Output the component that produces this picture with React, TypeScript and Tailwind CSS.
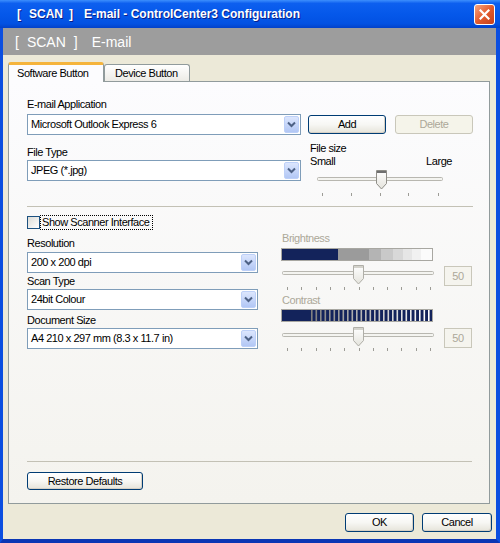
import React from "react";

// XP-style (Luna) dialog: [ SCAN ] E-mail - ControlCenter3 Configuration

function Btn({
  children,
  className = "",
  disabled = false,
}: {
  children: React.ReactNode;
  className?: string;
  disabled?: boolean;
}) {
  return (
    <div
      className={`flex items-center justify-center rounded-[3px] border ${
        disabled
          ? "border-[#c9c7ba] bg-[#f5f4ea] text-[#aca899]"
          : "border-[#003c74] bg-linear-to-b from-white via-[#f7f7f4] to-[#e6e4da] text-black shadow-[inset_-1px_-1px_0_#d6d0c5]"
      } ${className}`}
    >
      {children}
    </div>
  );
}

function Combo({ value, className = "" }: { value: string; className?: string }) {
  return (
    <div className={`flex h-[21px] items-center border border-[#7f9db9] bg-white ${className}`}>
      <span className="flex-1 truncate pl-[3px] leading-[13px]">{value}</span>
      <div className="mr-px flex h-[17px] w-[15px] items-center justify-center rounded-[2px] border border-[#bdd0f8] bg-linear-to-b from-[#dce6fd] to-[#b2c7f5]">
        <svg width="9" height="7" viewBox="0 0 9 7">
          <path d="M1 1.5 L4.5 5 L8 1.5" fill="none" stroke="#4d6185" strokeWidth="2" />
        </svg>
      </div>
    </div>
  );
}

// slider track + pentagon thumb + tick marks
function Slider({
  w,
  h,
  track,
  thumbX,
  thumbY,
  ticks,
  tickY,
  dark = false,
}: {
  w: number;
  h: number;
  track: [number, number, number];
  thumbX: number;
  thumbY: number;
  ticks: number[];
  tickY: number;
  dark?: boolean;
}) {
  const [x1, x2, ty] = track;
  return (
    <svg width={w} height={h} viewBox={`0 0 ${w} ${h}`} className="block">
      <defs>
        <linearGradient id={`th${thumbX}${thumbY}`} x1="0" y1="0" x2="0" y2="1">
          <stop offset="0" stopColor="#ffffff" />
          <stop offset="1" stopColor="#e4e3dc" />
        </linearGradient>
      </defs>
      <rect x={x1 + 0.5} y={ty - 1.5} width={x2 - x1} height="3" rx="1" fill="#f4f4f0" stroke="#b8b7b0" />
      <path
        d={`M${thumbX + 0.5} ${thumbY + 0.5} h10 v13 l-5 5.5 l-5 -5.5 z`}
        fill={`url(#th${thumbX}${thumbY})`}
        stroke={dark ? "#8f8e88" : "#b0afa8"}
      />
      <rect x={thumbX + 1} y={thumbY + 1} width="9" height="2" fill={dark ? "#6f6f6f" : "#d4d3cc"} />
      {ticks.map((t) => (
        <line key={t} x1={t + 0.5} x2={t + 0.5} y1={tickY} y2={tickY + 3} stroke="#9d9c96" />
      ))}
    </svg>
  );
}

function BrightnessBar() {
  const steps: [number, number, string][] = [
    [1, 57, "#13235b"],
    [57, 88, "#9b9b9b"],
    [88, 100, "#b4b4b4"],
    [100, 112, "#c9c9c9"],
    [112, 122, "#d8d8d8"],
    [122, 131, "#e6e6e6"],
    [131, 140, "#f1f1f1"],
    [140, 151, "#fbfbfb"],
  ];
  return (
    <svg width="152" height="13" viewBox="0 0 152 13" className="block">
      <rect x="0.5" y="0.5" width="151" height="12" fill="#fff" stroke="#a8a7a1" />
      {steps.map(([a, b, c]) => (
        <rect key={a} x={a} y="1" width={b - a} height="11" fill={c} />
      ))}
    </svg>
  );
}

function ContrastBar() {
  const stripes = Array.from({ length: 27 }, (_, i) => i);
  return (
    <svg width="152" height="13" viewBox="0 0 152 13" className="block">
      <rect x="0.5" y="0.5" width="151" height="12" fill="#13235b" stroke="#a8a7a1" />
      {stripes.map((i) => {
        const v = Math.round(0x80 + (0xff - 0x80) * (i / 26));
        return (
          <rect
            key={i}
            x={30 + i * 4.5}
            y="1"
            width="1.6"
            height="11"
            fill={`rgb(${v},${v},${v})`}
          />
        );
      })}
    </svg>
  );
}

function NumBox({ value }: { value: string }) {
  return (
    <div className="flex h-[20px] w-[28px] items-center justify-center border border-[#c9c7ba] bg-[#f5f4ee] text-[#aca899]">
      {value}
    </div>
  );
}

const BRIGHT_TICKS = Array.from({ length: 11 }, (_, i) => Math.round(6 + i * 14.3));

export default function App() {
  return (
    <div className="flex h-[543px] w-[500px] flex-col overflow-hidden font-['Liberation_Sans',Arial,sans-serif] text-[11px] tracking-[-0.45px] text-black">
      {/* title bar */}
      <div className="flex h-[28px] shrink-0 items-center bg-[linear-gradient(180deg,#3d8ffd_0%,#0d5fef_12%,#0558ea_50%,#0251e2_85%,#0241c8_100%)] pl-[17px] pr-[5px]">
        <div className="flex flex-1 items-center whitespace-pre text-[12px] font-bold leading-none tracking-normal text-white [text-shadow:1px_1px_0_#0a1e8a]">
          <span>[</span>
          <span className="ml-[8px]">SCAN</span>
          <span className="ml-[6px]">]</span>
          <span className="ml-[11px]">E-mail - ControlCenter3 Configuration</span>
        </div>
        <div className="flex h-[21px] w-[21px] items-center justify-center rounded-[3px] border border-white bg-linear-to-br from-[#f4a47e] via-[#e35b2d] to-[#c5401b]">
          <svg width="11" height="11" viewBox="0 0 11 11">
            <path d="M1.5 1.5 L9.5 9.5 M9.5 1.5 L1.5 9.5" stroke="#fff" strokeWidth="2.2" strokeLinecap="square" />
          </svg>
        </div>
      </div>

      {/* frame */}
      <div className="flex flex-1 flex-col border-r-[4px] border-b-[4px] border-l-[3px] border-r-[#0b4ee0] border-b-[#0a36b4] border-l-[#0b4ee0] bg-[#ece9d8]">
        {/* gray header band */}
        <div className="flex h-[27px] shrink-0 items-center whitespace-pre bg-[#9d9d9d] pl-[12px] text-[14px] leading-none tracking-normal text-white">
          <span>[</span>
          <span className="ml-[8px]">SCAN</span>
          <span className="ml-[8px]">]</span>
          <span className="ml-[14px]">E-mail</span>
        </div>

        {/* tabs */}
        <div className="mt-[7px] flex h-[19px] shrink-0 items-end pl-[5px]">
          <div className="relative z-10 -mb-px flex h-[20px] w-[96px] items-center rounded-t-[3px] border-x border-t-[3px] border-x-[#919b9c] border-t-[#f5b43c] bg-[#fcfcfe] pl-[8px] pt-[0px]">
            Software Button
          </div>
          <div className="flex h-[17px] w-[86px] items-center rounded-t-[3px] border-x border-t border-[#919b9c] bg-linear-to-b from-white to-[#ecebe6] pl-[10px]">
            Device Button
          </div>
        </div>

        {/* tab page */}
        <div className="ml-[5px] flex h-[423px] w-[482px] shrink-0 flex-col border border-[#919b9c] bg-linear-to-b from-[#fcfcfe] to-[#f4f3ee] pt-[16px] pr-[16px] pb-[13px] pl-[18px]">
          <div className="flex">
            <div className="w-[274px]">
              <div className="h-[13px] leading-[13px]">E-mail Application</div>
              <Combo className="mt-[3px]" value="Microsoft Outlook Express 6" />
              <div className="mt-[11px] h-[13px] leading-[13px]">File Type</div>
              <Combo className="mt-[1px]" value={'JPEG (*.jpg)'} />
            </div>
            <div className="ml-[7px] flex flex-col">
              <div className="mt-[17px] flex gap-[9px]">
                <Btn className="h-[19px] w-[78px]">Add</Btn>
                <Btn className="h-[19px] w-[78px]" disabled>
                  Delete
                </Btn>
              </div>
              <div className="mt-[8px] ml-[2px] h-[13px] leading-[13px]">File size</div>
              <div className="ml-[2px] flex h-[13px] w-[142px] justify-between leading-[13px]">
                <span>Small</span>
                <span>Large</span>
              </div>
              <div className="ml-[5px]">
                <Slider
                  w={132}
                  h={32}
                  track={[4, 129, 11]}
                  thumbX={63}
                  thumbY={2}
                  ticks={[9, 38, 67, 95, 125]}
                  tickY={25}
                  dark
                />
              </div>
            </div>
          </div>

          <div className="mt-[6px] h-px bg-[#c3c1b5]" />

          <div className="mt-[8px] flex h-[15px] items-center">
            <div className="h-[13px] w-[13px] border border-[#1c5180] bg-linear-to-br from-[#dcdcd7] to-white" />
            <div className="flex h-[15px] w-[113px] items-center border border-dotted border-black pl-[1px] leading-[13px]">
              Show Scanner Interface
            </div>
          </div>

          <div className="flex">
            <div className="w-[231px] pt-[7px]">
              <div className="h-[13px] leading-[13px]">Resolution</div>
              <Combo className="mt-[2px]" value="200 x 200 dpi" />
              <div className="mt-[2px] h-[13px] leading-[13px]">Scan Type</div>
              <Combo className="mt-[1px]" value="24bit Colour" />
              <div className="mt-[4px] h-[13px] leading-[13px]">Document Size</div>
              <Combo className="mt-[1px]" value="A4 210 x 297 mm (8.3 x 11.7 in)" />
            </div>

            <div className="ml-[23px] flex flex-col pt-[2px] text-[#aca899]">
              <div className="ml-px h-[13px] leading-[13px]">Brightness</div>
              <div className="mt-[3px]">
                <BrightnessBar />
              </div>
              <div className="mt-[3px] flex items-start">
                <Slider w={154} h={28} track={[1, 152, 9]} thumbX={72} thumbY={1} ticks={BRIGHT_TICKS} tickY={23} />
                <div className="mt-[2px] ml-[9px]">
                  <NumBox value="50" />
                </div>
              </div>
              <div className="mt-[2px] ml-px h-[13px] leading-[13px]">Contrast</div>
              <div className="mt-[2px]">
                <ContrastBar />
              </div>
              <div className="mt-[4px] flex items-start">
                <Slider w={154} h={28} track={[1, 152, 9]} thumbX={72} thumbY={1} ticks={BRIGHT_TICKS} tickY={22} />
                <div className="mt-[2px] ml-[9px]">
                  <NumBox value="50" />
                </div>
              </div>
            </div>
          </div>

          <div className="flex-1" />
          <div className="h-px w-[445px] bg-[#c3c1b5]" />
          <Btn className="mt-[10px] h-[18px] w-[116px]">Restore Defaults</Btn>
        </div>

        {/* footer buttons */}
        <div className="flex justify-end gap-[8px] pt-[9px] pr-[4px]">
          <Btn className="h-[19px] w-[69px]">OK</Btn>
          <Btn className="h-[19px] w-[70px]">Cancel</Btn>
        </div>
      </div>
    </div>
  );
}
